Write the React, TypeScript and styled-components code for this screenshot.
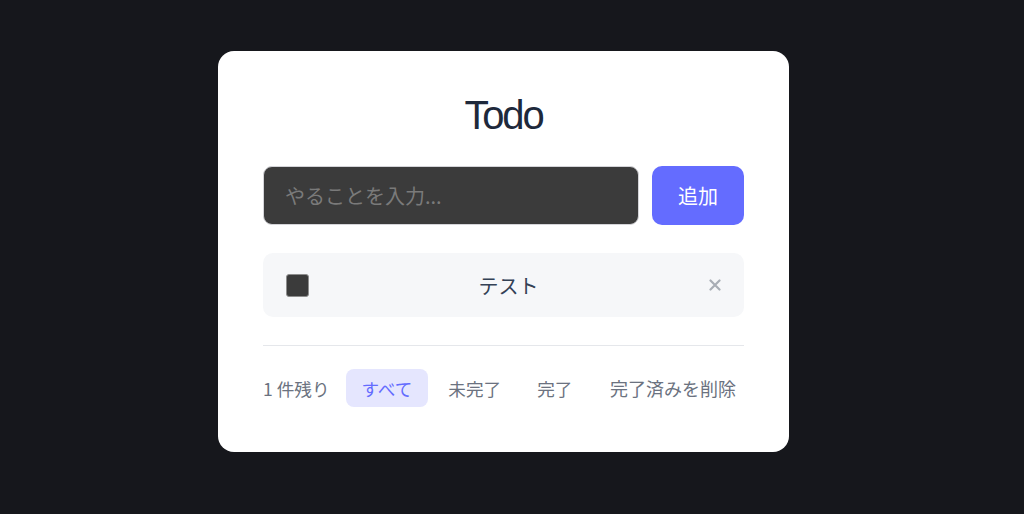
import React, { useState } from 'react';
import styled, { createGlobalStyle } from 'styled-components';

const GlobalStyle = createGlobalStyle`
  html, body {
    margin: 0;
    padding: 0;
    background: #16171c;
  }
  body {
    font-family: "Noto Sans CJK JP", "Noto Sans", sans-serif;
  }
`;

const Page = styled.div`
  min-height: 514px;
  box-sizing: border-box;
  display: flex;
  justify-content: center;
  align-items: flex-start;
  padding: 51px 17px 0 0;
`;

const Card = styled.div`
  width: 571px;
  box-sizing: border-box;
  background: #ffffff;
  border-radius: 16px;
  padding: 40px 45px 45px;
  display: flex;
  flex-direction: column;
`;

const Title = styled.h1`
  margin: 0;
  text-align: center;
  font-family: "Liberation Sans", Arial, sans-serif;
  font-size: 40px;
  line-height: 48px;
  font-weight: 500;
  letter-spacing: -0.055em;
  color: #1e293b;
`;

const Form = styled.form`
  display: flex;
  gap: 13px;
  margin-top: 27px;
`;

const TextInput = styled.input`
  flex: 1;
  height: 59px;
  box-sizing: border-box;
  background: #3b3b3b;
  border: 1px solid #d4d4d8;
  border-radius: 9px;
  padding: 0 21px;
  font-family: inherit;
  font-size: 20px;
  color: #f1f1f1;
  outline: none;

  &::placeholder {
    color: #7a7a7a;
  }
`;

const AddButton = styled.button`
  width: 92px;
  height: 59px;
  border: none;
  border-radius: 10px;
  background: #646cff;
  color: #ffffff;
  font-family: inherit;
  font-size: 20px;
  cursor: pointer;
`;

const List = styled.ul`
  list-style: none;
  margin: 28px 0 0;
  padding: 0;
  display: flex;
  flex-direction: column;
  gap: 10px;
`;

const Item = styled.li`
  height: 64px;
  box-sizing: border-box;
  background: #f6f7f9;
  border-radius: 10px;
  padding: 0 22px 0 23px;
  display: flex;
  align-items: center;
  gap: 16px;
`;

const Check = styled.input`
  appearance: none;
  margin: 0;
  width: 23px;
  height: 23px;
  box-sizing: border-box;
  background: #3b3b3b;
  border: 1px solid #8d8d8d;
  border-radius: 3px;
`;

const ItemText = styled.span<{ $done?: boolean }>`
  flex: 1;
  text-align: center;
  font-size: 20px;
  color: ${(p) => (p.$done ? '#9ca3af' : '#334155')};
  text-decoration: ${(p) => (p.$done ? 'line-through' : 'none')};
`;

const DeleteButton = styled.button`
  border: none;
  background: none;
  padding: 0;
  width: 14px;
  height: 14px;
  display: flex;
  align-items: center;
  justify-content: center;
  color: #a8adb5;
  cursor: pointer;
`;

const Divider = styled.hr`
  border: none;
  border-top: 1px solid #e5e7eb;
  margin: 28px 0 0;
`;

const Footer = styled.div`
  display: flex;
  align-items: center;
  margin-top: 23px;
  font-size: 17.6px;
  color: #6b7280;
`;

const Count = styled.span`
  margin-right: 16px;
`;

const Filters = styled.div`
  display: flex;
  gap: 4px;
`;

const FilterButton = styled.button<{ $active?: boolean }>`
  height: 38px;
  padding: 0 16px;
  border: none;
  border-radius: 8px;
  font-family: inherit;
  font-size: 17.6px;
  background: ${(p) => (p.$active ? '#e5e6fe' : 'transparent')};
  color: ${(p) => (p.$active ? '#646cff' : '#6b7280')};
  cursor: pointer;
`;

const ClearButton = styled.button`
  margin-left: auto;
  height: 38px;
  padding: 0 8px;
  border: none;
  background: none;
  font-family: inherit;
  font-size: 18px;
  color: #6b7280;
  cursor: pointer;
`;

const filters = ['すべて', '未完了', '完了'];

export default function App() {
  const [active, setActive] = useState('すべて');
  const [todos] = useState([{ id: 1, text: 'テスト', done: false }]);

  return (
    <>
      <GlobalStyle />
      <Page>
        <Card>
          <Title>Todo</Title>
          <Form onSubmit={(e) => e.preventDefault()}>
            <TextInput placeholder="やることを入力..." />
            <AddButton type="submit">追加</AddButton>
          </Form>
          <List>
            {todos.map((t) => (
              <Item key={t.id}>
                <Check type="checkbox" defaultChecked={t.done} />
                <ItemText $done={t.done}>{t.text}</ItemText>
                <DeleteButton aria-label="削除">
                  <svg width="12" height="12" viewBox="0 0 12 12">
                    <path d="M1.5 1.5 L10.5 10.5 M10.5 1.5 L1.5 10.5" stroke="currentColor" strokeWidth="2.2" strokeLinecap="round" />
                  </svg>
                </DeleteButton>
              </Item>
            ))}
          </List>
          <Divider />
          <Footer>
            <Count>1 件残り</Count>
            <Filters>
              {filters.map((f) => (
                <FilterButton key={f} $active={active === f} onClick={() => setActive(f)}>
                  {f}
                </FilterButton>
              ))}
            </Filters>
            <ClearButton>完了済みを削除</ClearButton>
          </Footer>
        </Card>
      </Page>
    </>
  );
}
